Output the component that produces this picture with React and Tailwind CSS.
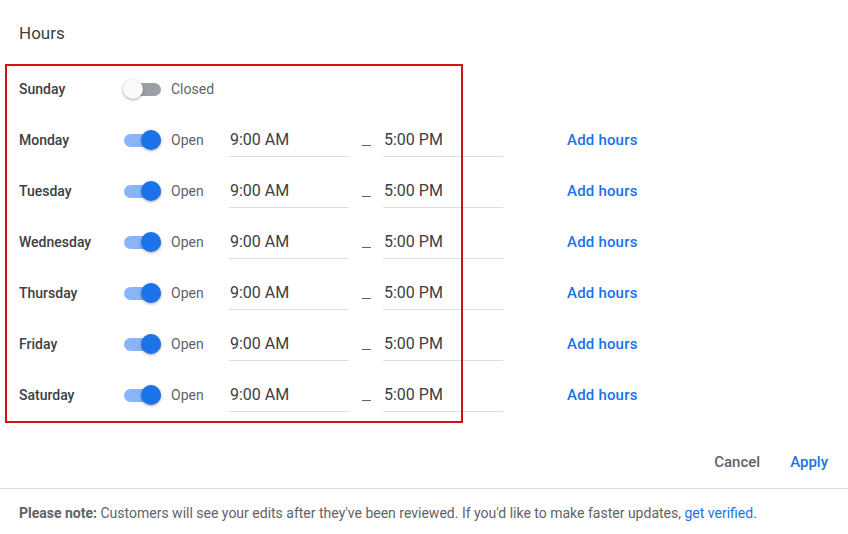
import React from "react";

const days = [
  { name: "Sunday", open: false },
  { name: "Monday", open: true },
  { name: "Tuesday", open: true },
  { name: "Wednesday", open: true },
  { name: "Thursday", open: true },
  { name: "Friday", open: true },
  { name: "Saturday", open: true },
];

const Toggle = ({ on }) => (
  <div className="relative w-[37px] h-[20px] flex items-center shrink-0">
    <div
      className={`w-full h-[13px] rounded-full ${on ? "bg-[#8ab4f8]" : "bg-[#9aa0a6]"}`}
    />
    <div
      className={`absolute top-0 w-[20px] h-[20px] rounded-full shadow-[0_1px_3px_rgba(0,0,0,0.35)] ${
        on ? "left-[17px] bg-[#1a73e8]" : "left-[-1px] bg-[#f8f9fa]"
      }`}
    />
  </div>
);

const TimeInput = ({ value }) => (
  <div className="w-[120px] h-[34px] flex items-center pl-[1px] pt-[1px] border-b border-[#dadce0] text-[16px] text-[#3c4043]">
    {value}
  </div>
);

const DayRow = ({ day }) => (
  <div className="h-[51px] flex items-center">
    <div className="w-[105px] text-[14px] font-medium text-[#3c4043]">{day.name}</div>
    <Toggle on={day.open} />
    <div className="w-[68px] pl-[10px] text-[14px] text-[#5f6368]">
      {day.open ? "Open" : "Closed"}
    </div>
    {day.open && (
      <>
        <TimeInput value="9:00 AM" />
        <div className="w-[34px] flex justify-center pt-[10px]">
          <div className="w-[9px] h-px bg-[#5f6368]" />
        </div>
        <TimeInput value="5:00 PM" />
        <div className="ml-[64px] text-[15px] tracking-[0.2px] font-medium text-[#1a73e8]">Add hours</div>
      </>
    )}
  </div>
);

export default function App() {
  return (
    <div className="w-[848px] h-[534px] bg-white font-['Roboto',sans-serif] overflow-hidden">
      <div className="px-[19px] pt-[22px] h-[64px] text-[17px] text-[#3c4043] leading-[22px]">
        Hours
      </div>

      <div className="relative pl-[19px] -mt-[0.5px]">
        <div className="absolute left-[5px] top-[0.5px] w-[458px] h-[359px] border-2 border-[#d50f1b] pointer-events-none" />
        {days.map((d) => (
          <DayRow key={d.name} day={d} />
        ))}
      </div>

      <div className="flex justify-end items-center gap-[30px] pr-[20px] h-[44px] mt-[20px] text-[15px] font-medium">
        <span className="text-[#5f6368]">Cancel</span>
        <span className="text-[#1a73e8]">Apply</span>
      </div>

      <div className="mt-[3px] border-t border-[#dadce0]" />

      <div className="px-[19px] pt-[14px] text-[14px] text-[#5f6368] leading-[20px]">
        <span className="font-bold">Please note:</span> Customers will see your edits after they've been reviewed. If you'd like to make faster updates,{" "}
        <span className="text-[#1a73e8]">get verified</span>.
      </div>
    </div>
  );
}
